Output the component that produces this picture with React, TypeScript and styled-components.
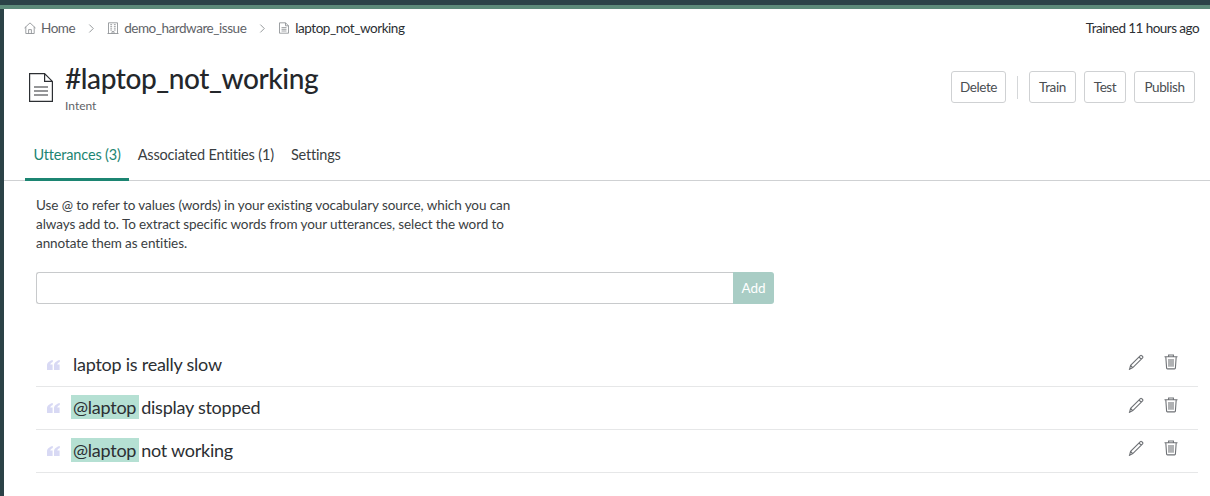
import { createGlobalStyle, styled } from "styled-components";

const GlobalStyle = createGlobalStyle`
  html, body {
    margin: 0;
    padding: 0;
    height: 100%;
    overflow: hidden;
    background: #fff;
  }
  body {
    font-family: Lato, "Noto Sans", sans-serif;
    color: #2c2f33;
  }
`;

const utterances = [
  { entity: "", text: "laptop is really slow" },
  { entity: "@laptop", text: "display stopped" },
  { entity: "@laptop", text: "not working" },
];

function HomeIcon() {
  return (
    <CrumbSvg viewBox="0 0 12 12">
      <path d="M.5 6 6 .9 11.500 6M1.800 4.800v6.700h8.400V4.800M4.600 11.500V7.600h2.800v3.900" />
    </CrumbSvg>
  );
}

function BuildingIcon() {
  return (
    <CrumbSvg viewBox="0 0 12 12">
      <path d="M1.500 11.500V.8h9v10.700M.5 11.500h11M3.300 2.600h1.800M3.300 4.400h1.800M3.300 6.200h1.800M3.300 8h1.800M6.900 2.600h1.800M6.900 4.400h1.800M6.900 6.200h1.800M6.900 8h1.800M5 11.500V9.600h2v1.900" />
    </CrumbSvg>
  );
}

function DocIcon() {
  return (
    <CrumbSvg viewBox="0 0 12 12">
      <path d="M1.500.8h6L10.500 3.800v7.400h-9zM7.500.8v3h3M3.500 5.600h5M3.500 7.300h5M3.500 9h5" />
    </CrumbSvg>
  );
}

function Chevron() {
  return (
    <ChevronSvg viewBox="0 0 8 12">
      <path d="M1.500 1.500 6 6l-4.500 4.500" />
    </ChevronSvg>
  );
}

function PageIcon() {
  return (
    <PageSvg viewBox="0 0 24 29">
      <path d="M.6.6h15L23.400 8.400v20H.6zM15.600.6v7.800h7.800M5 14h14M5 18h14M5 22h14" />
    </PageSvg>
  );
}

function QuoteIcon() {
  return (
    <QuoteSvg viewBox="0 0 13 10">
      <path d="M5.800 0C2.400.8 0 2.800 0 5.500V10h5.600V4.500H3.200C3.500 3.300 4.500 2.500 5.800 2zM12.800 0C9.400.8 7 2.800 7 5.500V10h5.600V4.500h-2.400c.3-1.200 1.300-2 2.600-2.500z" />
    </QuoteSvg>
  );
}

function PencilIcon() {
  return (
    <ActionSvg viewBox="0 0 16 16">
      <path d="M1.500 15.300 2.600 11.400 12.400 1.600a.9.9 0 0 1 1.300 0l.9.9a.9.9 0 0 1 0 1.300L4.800 13.600zM2.600 11.400 4.800 13.600M11 3l2.200 2.200" />
    </ActionSvg>
  );
}

function TrashIcon() {
  return (
    <ActionSvg viewBox="0 0 16 16">
      <path d="M1.500 2.800h13M5.600 2.800V1h4.800v1.800M2.800 2.800l.8 11.300a.8.8 0 0 0 .8.8h7.200a.8.8 0 0 0 .8-.8l.8-11.300M6 5v7.800M8 5v7.800M10 5v7.800" />
    </ActionSvg>
  );
}

export default function App() {
  return (
    <>
      <GlobalStyle />
      <Page>
        <TopStrip />
        <Body>
          <Rail />
          <Main>
            <CrumbBar>
              <Crumbs>
                <Crumb>
                  <HomeIcon />
                  Home
                </Crumb>
                <Chevron />
                <Crumb>
                  <BuildingIcon />
                  demo_hardware_issue
                </Crumb>
                <Chevron />
                <Crumb $current>
                  <DocIcon />
                  laptop_not_working
                </Crumb>
              </Crumbs>
              <Trained>Trained 11 hours ago</Trained>
            </CrumbBar>
            <Header>
              <PageIcon />
              <Heading>
                <Title>#laptop_not_working</Title>
                <Subtitle>Intent</Subtitle>
              </Heading>
              <Toolbar>
                <Button $width={55}>Delete</Button>
                <Separator />
                <Button $width={47}>Train</Button>
                <Button $width={42}>Test</Button>
                <Button $width={61}>Publish</Button>
              </Toolbar>
            </Header>
            <Tabs>
              <Tab $active>Utterances (3)</Tab>
              <Tab>Associated Entities (1)</Tab>
              <Tab>Settings</Tab>
            </Tabs>
            <Content>
              <Description>
                Use @ to refer to values (words) in your existing vocabulary source, which you can
                always add to. To extract specific words from your utterances, select the word to
                annotate them as entities.
              </Description>
              <AddRow>
                <AddInput />
                <AddButton>Add</AddButton>
              </AddRow>
              <List>
                {utterances.map((u) => (
                  <Row key={u.text}>
                    <QuoteIcon />
                    <Utterance $tagged={!!u.entity}>
                      {u.entity ? <Entity>{u.entity}</Entity> : null}
                      {u.text}
                    </Utterance>
                    <Actions>
                      <PencilIcon />
                      <TrashIcon />
                    </Actions>
                  </Row>
                ))}
              </List>
            </Content>
          </Main>
        </Body>
      </Page>
    </>
  );
}

const Page = styled.div`
  width: 1210px;
  height: 496px;
  display: flex;
  flex-direction: column;
  overflow: hidden;
`;

const TopStrip = styled.div`
  height: 9px;
  flex: none;
  box-sizing: border-box;
  background: #2b4247;
  border-bottom: 4px solid #5c8a79;
`;

const Body = styled.div`
  flex: 1;
  display: flex;
`;

const Rail = styled.div`
  width: 4px;
  flex: none;
  background: #2b4247;
`;

const Main = styled.div`
  flex: 1;
  min-width: 0;
  display: flex;
  flex-direction: column;
`;

const CrumbBar = styled.div`
  height: 38px;
  padding: 0 11px 0 20px;
  box-sizing: border-box;
  display: flex;
  align-items: center;
  justify-content: space-between;
`;

const Crumbs = styled.div`
  display: flex;
  align-items: center;
  gap: 12.500px;
`;

const Crumb = styled.span<{ $current?: boolean }>`
  display: flex;
  align-items: center;
  gap: 5px;
  font-size: 13.500px;
  letter-spacing: -0.46px;
  color: ${(p) => (p.$current ? "#2c2f33" : "#5f6368")};
`;

const CrumbSvg = styled.svg`
  width: 12px;
  height: 12px;
  fill: none;
  stroke: #85898d;
  stroke-width: 0.8;
`;

const ChevronSvg = styled.svg`
  width: 7px;
  height: 11px;
  fill: none;
  stroke: #85898d;
  stroke-width: 1;
`;

const Trained = styled.span`
  font-size: 13.500px;
  letter-spacing: -0.55px;
  color: #2c2f33;
`;

const Header = styled.div`
  height: 72px;
  padding: 0 15px 0 25px;
  display: flex;
  align-items: flex-start;
`;

const PageSvg = styled.svg`
  width: 24px;
  height: 29px;
  margin-top: 26px;
  fill: none;
  stroke: #2c2f33;
  stroke-width: 1.2;
`;

const Heading = styled.div`
  margin-left: 12px;
  padding-top: 11px;
`;

const Title = styled.h1`
  margin: 0;
  font-size: 28px;
  line-height: 40px;
  font-weight: 500;
  letter-spacing: -0.42px;
  color: #24272b;
`;

const Subtitle = styled.div`
  font-size: 12px;
  line-height: 16px;
  color: #5f6368;
`;

const Toolbar = styled.div`
  margin-left: auto;
  margin-top: 24px;
  display: flex;
  align-items: center;
  gap: 8px;
`;

const Button = styled.button<{ $width: number }>`
  width: ${(p) => p.$width}px;
  height: 32px;
  padding: 0;
  background: #fff;
  border: 1px solid #cfd1d3;
  border-radius: 3px;
  font-family: inherit;
  font-size: 13.500px;
  letter-spacing: -0.4px;
  color: #4a4e52;
`;

const Separator = styled.div`
  width: 1px;
  height: 23px;
  margin: 0 3px;
  background: #d5d7d9;
`;

const Tabs = styled.div`
  height: 62px;
  box-sizing: border-box;
  padding: 0 0 0 21px;
  display: flex;
  align-items: flex-end;
  border-bottom: 1px solid #cfd1d3;
`;

const Tab = styled.div<{ $active?: boolean }>`
  height: 52px;
  box-sizing: border-box;
  margin-bottom: -1px;
  padding: 17px 8.500px 0;
  font-size: 14.500px;
  letter-spacing: -0.17px;
  color: ${(p) => (p.$active ? "#1c8572" : "#3a3e42")};
  border-bottom: 3px solid ${(p) => (p.$active ? "#1c8572" : "transparent")};
`;

const Content = styled.div`
  padding: 15px 12px 0 32px;
`;

const Description = styled.p`
  margin: 0;
  width: 490px;
  font-size: 13.500px;
  letter-spacing: -0.08px;
  line-height: 19px;
  color: #3a3e42;
`;

const AddRow = styled.div`
  margin-top: 19px;
  width: 738px;
  display: flex;
`;

const AddInput = styled.input`
  flex: 1;
  height: 32px;
  box-sizing: border-box;
  border: 1px solid #c8cacc;
  border-right: none;
  border-radius: 3px 0 0 3px;
  outline: none;
`;

const AddButton = styled.button`
  width: 41px;
  height: 32px;
  padding: 0 0 1px;
  border: none;
  border-radius: 0 3px 3px 0;
  background: #a9cdc5;
  color: #fff;
  font-family: inherit;
  font-size: 13.500px;
`;

const List = styled.div`
  margin-top: 40px;
`;

const Row = styled.div`
  height: 43px;
  box-sizing: border-box;
  padding: 0 19px 2px 11px;
  display: flex;
  align-items: center;
  border-bottom: 1px solid #e6e7e8;
`;

const QuoteSvg = styled.svg`
  width: 13px;
  height: 10px;
  flex: none;
  margin-top: 2px;
  fill: #d8d9f4;
`;

const Utterance = styled.div<{ $tagged: boolean }>`
  margin-left: ${(p) => (p.$tagged ? "11px" : "13px")};
  font-size: 18px;
  letter-spacing: -0.25px;
  color: #2c2f33;
`;

const Entity = styled.span`
  padding: 1px 3px 1px 2px;
  margin-right: 2px;
  background: #b5e0d3;
`;

const Actions = styled.div`
  margin-left: auto;
  display: flex;
  gap: 19px;
  margin-top: -5px;
`;

const ActionSvg = styled.svg`
  width: 16px;
  height: 16px;
  fill: none;
  stroke: #6f7276;
  stroke-width: 1.100;
`;
